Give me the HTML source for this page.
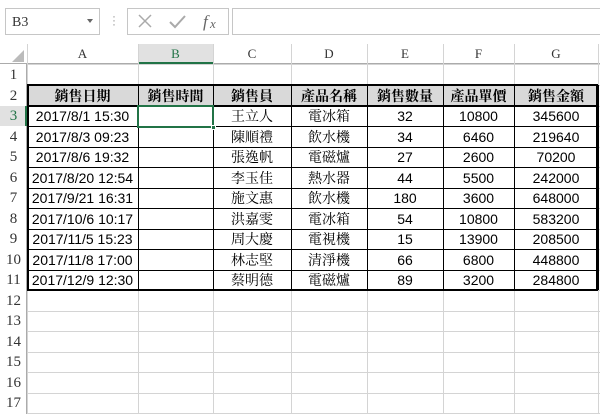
<!DOCTYPE html>
<html><head><meta charset="utf-8"><style>
*{margin:0;padding:0;box-sizing:border-box}
body{width:600px;height:414px;background:#fff;position:relative;overflow:hidden;font-family:"Liberation Sans","Noto Serif CJK TC","Noto Serif CJK SC",serif;}
.a{position:absolute}
.c{position:absolute;text-align:center;font-size:14px;line-height:20px;color:#000;white-space:nowrap}
.h{font-weight:bold}
</style></head><body>
<div class="a" style="left:0;top:0;width:600px;height:40px;background:#fff"></div>
<div class="a" style="left:5px;top:8px;width:95px;height:27px;border:1px solid #c6c6c6;font:14px 'Liberation Serif',serif;padding:6px 0 0 6px;color:#333">B3</div>
<div class="a" style="left:87px;top:19px;width:0;height:0;border-left:3px solid transparent;border-right:3px solid transparent;border-top:4px solid #666"></div>
<div class="a" style="left:112px;top:14px;color:#999;font-size:12px;line-height:4px">·<br>·<br>·</div>
<div class="a" style="left:127px;top:8px;width:102px;height:27px;border:1px solid #c6c6c6"></div>
<svg class="a" style="left:137px;top:12px" width="90" height="20"><path d="M2 3 L14 15 M14 3 L2 15" stroke="#aaa" stroke-width="1.5" fill="none"/><path d="M33 10 L38 15 L48 4" stroke="#aaa" stroke-width="2" fill="none"/><text x="66" y="15" font-family="Liberation Serif" font-style="italic" font-size="17" fill="#666">f</text><text x="73" y="16" font-family="Liberation Serif" font-style="italic" font-size="13" fill="#666">x</text></svg>
<div class="a" style="left:232px;top:8px;width:370px;height:27px;border:1px solid #c6c6c6"></div>
<div class="a" style="left:0;top:44px;width:600px;height:20px;background:#fff;border-bottom:1px solid #ababab"></div>
<div class="a" style="left:138px;top:44px;width:75px;height:20px;background:#e1e1e1;border-bottom:2px solid #217346"></div>
<svg class="a" style="left:10px;top:48px" width="15" height="15"><path d="M14 2 L14 14 L2 14 Z" fill="#bbb"/></svg>
<div class="a" style="left:0;top:64px;width:27px;height:350px;background:#fff;border-right:1px solid #ababab"></div>
<div id="g"></div>
<script>
var X=[0,27,138,213,291,367,443,514,598];
var T=function(r){return r==0?44:(r==1?64:85+20.5*(r-2));};
var out='';
// grid lines
for(var r=1;r<=18;r++){out+='<div class="a" style="left:27px;top:'+Math.round(T(r))+'px;width:573px;height:1px;background:#d4d4d4"></div>';}
for(var i=1;i<X.length;i++){out+='<div class="a" style="left:'+X[i]+'px;top:44px;width:1px;height:370px;background:#d4d4d4"></div>';}
var cols=['A','B','C','D','E','F','G'];
for(var i=0;i<7;i++){out+='<div class="c" style="left:'+X[i+1]+'px;top:44px;width:'+(X[i+2]-X[i+1])+'px;font-family:\'Liberation Serif\',serif;font-size:13px;color:'+(i==1?'#217346':'#333')+'">'+cols[i]+'</div>';}
for(var r=1;r<=17;r++){out+='<div class="c" style="left:0;top:'+(T(r)+0.5)+'px;width:27px;font-family:\'Liberation Serif\',serif;font-size:15px;color:'+(r==3?'#217346':'#333')+'">'+r+'</div>';}
out+='<div class="a" style="left:0;top:'+T(3)+'px;width:27px;height:20.5px;background:#e1e1e1;border-right:2px solid #217346"></div>';
out+='<div class="c" style="left:0;top:'+(T(3)+0.5)+'px;width:27px;font-family:\'Liberation Serif\',serif;font-size:15px;color:#217346">3</div>';
// header fill
out+='<div class="a" style="left:27px;top:85px;width:571px;height:21px;background:#d9d9d9"></div>';
var H=['銷售日期','銷售時間','銷售員','產品名稱','銷售數量','產品單價','銷售金額'];
var D=[['2017/8/1 15:30','','王立人','電冰箱','32','10800','345600'],['2017/8/3 09:23','','陳順禮','飲水機','34','6460','219640'],['2017/8/6 19:32','','張逸帆','電磁爐','27','2600','70200'],['2017/8/20 12:54','','李玉佳','熱水器','44','5500','242000'],['2017/9/21 16:31','','施文惠','飲水機','180','3600','648000'],['2017/10/6 10:17','','洪嘉雯','電冰箱','54','10800','583200'],['2017/11/5 15:23','','周大慶','電視機','15','13900','208500'],['2017/11/8 17:00','','林志堅','清淨機','66','6800','448800'],['2017/12/9 12:30','','蔡明德','電磁爐','89','3200','284800']];
for(var r=2;r<=11;r++){out+='<div class="a" style="left:27px;top:'+Math.round(T(r))+'px;width:571px;height:1px;background:#000"></div>';}
for(var i=1;i<X.length;i++){out+='<div class="a" style="left:'+X[i]+'px;top:85px;width:1px;height:205px;background:#000"></div>';}
out+='<div class="a" style="left:27px;top:84px;width:571px;height:2px;background:#000"></div>';
out+='<div class="a" style="left:27px;top:105px;width:571px;height:2px;background:#000"></div>';
out+='<div class="a" style="left:27px;top:289px;width:571px;height:2px;background:#000"></div>';
out+='<div class="a" style="left:27px;top:85px;width:2px;height:205px;background:#000"></div>';
out+='<div class="a" style="left:596px;top:85px;width:2px;height:205px;background:#000"></div>';
for(var i=0;i<7;i++){out+='<div class="c h" style="left:'+X[i+1]+'px;top:86px;width:'+(X[i+2]-X[i+1])+'px">'+H[i]+'</div>';}
for(var r=0;r<9;r++)for(var i=0;i<7;i++){out+='<div class="c" style="left:'+X[i+1]+'px;top:'+(T(r+3)+0.5)+'px;width:'+(X[i+2]-X[i+1])+'px">'+D[r][i]+'</div>';}
out+='<div class="a" style="left:137px;top:105px;width:77px;height:23px;border:2px solid #217346"></div>';
out+='<div class="a" style="left:211px;top:125px;width:5px;height:5px;background:#217346;border:1px solid #fff"></div>';
document.getElementById('g').innerHTML=out;
</script>
</body></html>
